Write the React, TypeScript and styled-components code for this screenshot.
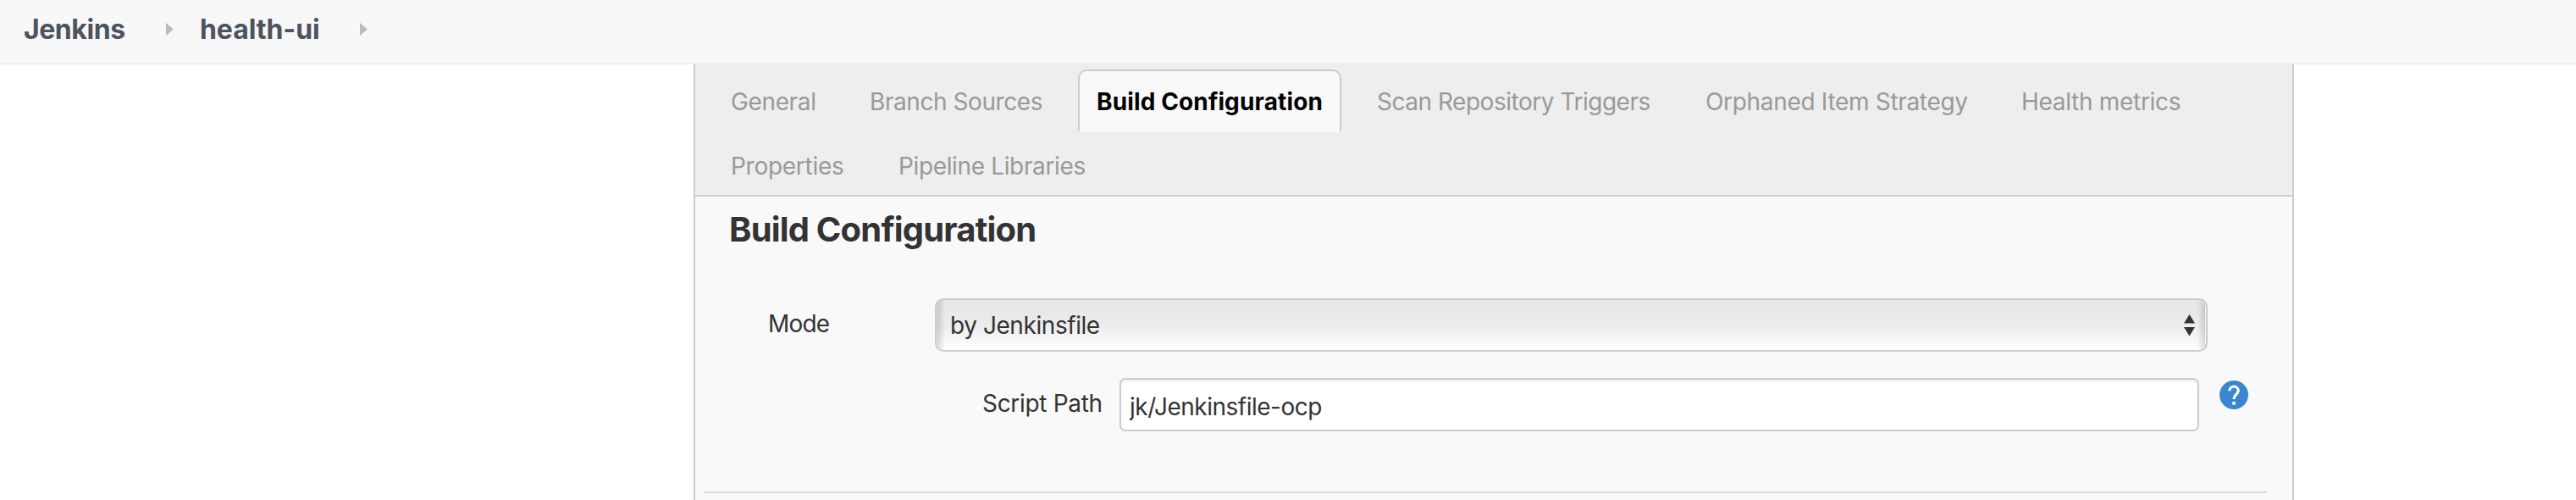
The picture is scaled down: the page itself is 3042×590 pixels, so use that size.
import React from 'react';
import styled, { createGlobalStyle } from 'styled-components';

const GlobalStyle = createGlobalStyle`
  *, *::before, *::after { box-sizing: border-box; }
  body { margin: 0; background: #fff; color: #333; font-family: Inter, sans-serif; font-size: 28px; }
`;

const Page = styled.div`
  display: flex;
  flex-direction: column;
  height: 590px;
  overflow: hidden;
`;

const BreadcrumbBar = styled.nav`
  display: flex;
  align-items: center;
  flex: none;
  height: 76px;
  padding: 0 0 6px 28px;
  background: #f8f8f8;
  border-bottom: 2px solid #ebeff2;
`;

const Crumb = styled.a<{ $width: number; $tracking: number }>`
  width: ${(p) => p.$width}px;
  padding-top: 2px;
  font-size: 32px;
  font-weight: 700;
  line-height: 40px;
  letter-spacing: ${(p) => p.$tracking}px;
  white-space: nowrap;
  color: #4d545d;
`;

const Separator = styled.svg`
  flex: none;
  width: 9px;
  height: 15px;
  margin-right: 31px;
  fill: #bbb;
`;

const Panel = styled.main`
  display: flex;
  flex-direction: column;
  flex: 1;
  width: 1890px;
  margin-left: 819px;
  background: #f9f9f9;
  border: solid #ccc;
  border-width: 0 2px;
`;

const TabBar = styled.div`
  display: flex;
  flex-direction: column;
  gap: 2px;
  flex: none;
  height: 156px;
  padding: 6px 0 0 20px;
  background: #eee;
  border-bottom: 2px solid #ccc;
`;

const TabRow = styled.div`
  display: flex;
  gap: 20px;
`;

const Tab = styled.div<{ $active?: boolean; $width: number; $tracking: number }>`
  width: ${(p) => p.$width}px;
  height: 74px;
  padding: 16px 0 0 20px;
  border: 2px solid ${(p) => (p.$active ? '#ccc' : 'transparent')};
  border-bottom-color: ${(p) => (p.$active ? '#f9f9f9' : 'transparent')};
  border-radius: 10px 10px 0 0;
  background: ${(p) => (p.$active ? '#f9f9f9' : 'transparent')};
  color: ${(p) => (p.$active ? '#000' : '#999')};
  font-weight: ${(p) => (p.$active ? 700 : 400)};
  line-height: 40px;
  letter-spacing: ${(p) => p.$tracking}px;
  white-space: nowrap;
`;

const Heading = styled.h1`
  margin: 14px 0 0 40px;
  font-size: 40px;
  font-weight: 700;
  line-height: 50px;
  letter-spacing: -0.82px;
`;

const Field = styled.div<{ $top: number; $indent: number }>`
  display: flex;
  align-items: flex-start;
  margin-top: ${(p) => p.$top}px;
  padding-left: ${(p) => p.$indent}px;
`;

const Label = styled.label<{ $width: number; $tracking: number }>`
  flex: none;
  width: ${(p) => p.$width}px;
  padding-top: 10px;
  line-height: 40px;
  letter-spacing: ${(p) => p.$tracking}px;
`;

const Select = styled.div`
  display: flex;
  align-items: center;
  justify-content: space-between;
  width: 1503px;
  height: 63px;
  padding: 0 13px 0 16px;
  border: 2px solid #ccc;
  border-radius: 10px;
  background:
    linear-gradient(to right, rgba(0, 0, 0, 0.16), transparent 10px, transparent calc(100% - 10px), rgba(0, 0, 0, 0.16)),
    linear-gradient(#e6e6e6, #ececec 50%, #fff);
  box-shadow: inset -1px 0 0 rgba(255, 255, 255, 0.8), inset 1px 0 0 rgba(255, 255, 255, 0.3);
  line-height: 40px;
  letter-spacing: -0.43px;
`;

const Arrows = styled.svg`
  width: 13px;
  height: 26px;
  fill: #333;
`;

const TextInput = styled.input`
  width: 1275px;
  height: 63px;
  padding: 4px 0 0 10px;
  border: 2px solid #ccc;
  border-radius: 7px;
  outline: none;
  background: #fff;
  box-shadow: inset 0 2px 3px rgba(0, 0, 0, 0.07);
  color: #333;
  font: 28px Inter, sans-serif;
  letter-spacing: -0.5px;
`;

const HelpIcon = styled.svg`
  width: 34px;
  height: 34px;
  margin: 3px 0 0 24px;
`;

const Divider = styled.hr`
  width: 1846px;
  height: 2px;
  margin: 71px 0 0 10px;
  border: 0;
  background: #dadada;
`;

const tabRows = [
  [
    { label: 'General', width: 144, tracking: -0.37 },
    { label: 'Branch Sources', width: 248, tracking: -0.43 },
    { label: 'Build Configuration', width: 311, tracking: 0.13, active: true },
    { label: 'Scan Repository Triggers', width: 368, tracking: -0.48 },
    { label: 'Orphaned Item Strategy', width: 353, tracking: -0.32 },
    { label: 'Health metrics', width: 231, tracking: -0.3 },
  ],
  [
    { label: 'Properties', width: 178, tracking: -0.28 },
    { label: 'Pipeline Libraries', width: 262, tracking: -0.36 },
  ],
];

function CrumbArrow() {
  return (
    <Separator viewBox="0 0 9 15">
      <path d="M0 0L9 7.5L0 15Z" />
    </Separator>
  );
}

export default function App() {
  return (
    <>
      <GlobalStyle />
      <Page>
        <BreadcrumbBar>
          <Crumb $width={168} $tracking={-0.45}>Jenkins</Crumb>
          <CrumbArrow />
          <Crumb $width={189} $tracking={-0.08}>health-ui</Crumb>
          <CrumbArrow />
        </BreadcrumbBar>
        <Panel>
          <TabBar>
            {tabRows.map((row, i) => (
              <TabRow key={i}>
                {row.map((t) => (
                  <Tab key={t.label} $width={t.width} $tracking={t.tracking} $active={'active' in t}>
                    {t.label}
                  </Tab>
                ))}
              </TabRow>
            ))}
          </TabBar>
          <Heading>Build Configuration</Heading>
          <Field $top={56} $indent={86}>
            <Label $width={197} $tracking={-0.8}>Mode</Label>
            <Select>
              by Jenkinsfile
              <Arrows viewBox="0 0 13 26">
                <path d="M6.5 0L13 10.5H0ZM0 15H13L6.5 25.5Z" />
              </Arrows>
            </Select>
          </Field>
          <Field $top={31} $indent={339}>
            <Label $width={162} $tracking={-0.31}>Script Path</Label>
            <TextInput defaultValue="jk/Jenkinsfile-ocp" />
            <HelpIcon viewBox="0 0 34 34">
              <circle cx="17" cy="17" r="17" fill="#3a87cf" />
              <path d="M11.8 12.2A5.2 5.2 0 0 1 22.2 12.2C22.2 16 17 16.6 17 22" fill="none" stroke="#fff" strokeWidth="3.2" />
              <rect x="15.2" y="25" width="3.6" height="3.6" fill="#fff" />
            </HelpIcon>
          </Field>
          <Divider />
        </Panel>
      </Page>
    </>
  );
}
